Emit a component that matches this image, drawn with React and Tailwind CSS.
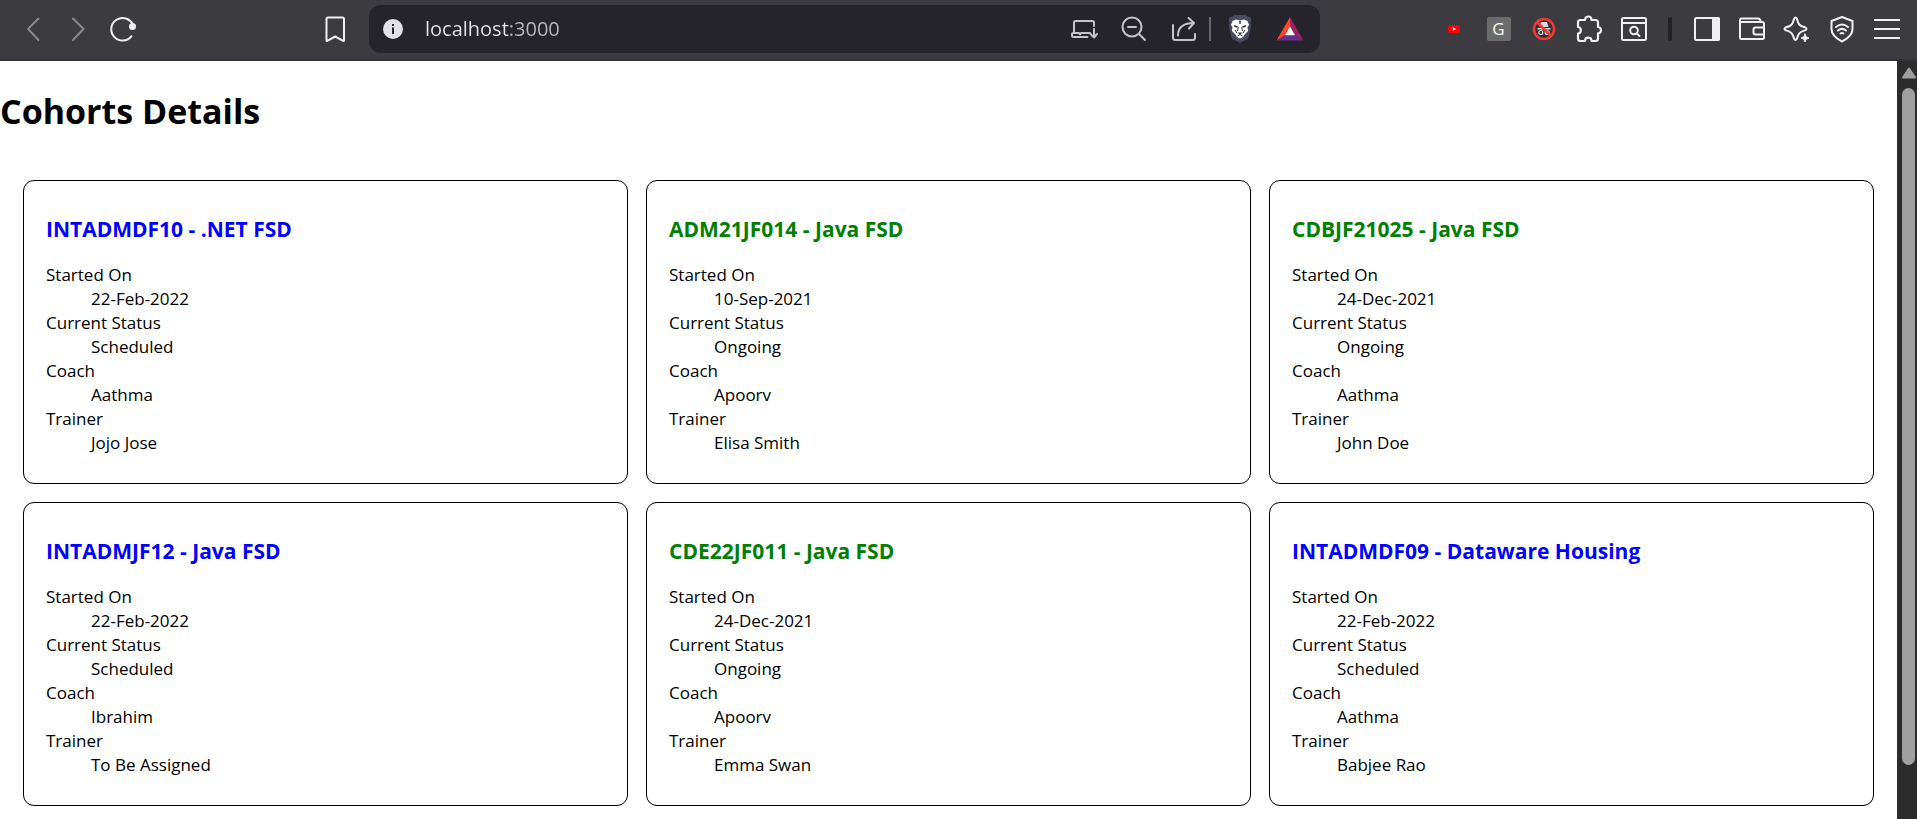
import React from "react";

const cohorts = [
  { code: "INTADMDF10", track: ".NET FSD", started: "22-Feb-2022", status: "Scheduled", coach: "Aathma", trainer: "Jojo Jose" },
  { code: "ADM21JF014", track: "Java FSD", started: "10-Sep-2021", status: "Ongoing", coach: "Apoorv", trainer: "Elisa Smith" },
  { code: "CDBJF21025", track: "Java FSD", started: "24-Dec-2021", status: "Ongoing", coach: "Aathma", trainer: "John Doe" },
  { code: "INTADMJF12", track: "Java FSD", started: "22-Feb-2022", status: "Scheduled", coach: "Ibrahim", trainer: "To Be Assigned" },
  { code: "CDE22JF011", track: "Java FSD", started: "24-Dec-2021", status: "Ongoing", coach: "Apoorv", trainer: "Emma Swan" },
  { code: "INTADMDF09", track: "Dataware Housing", started: "22-Feb-2022", status: "Scheduled", coach: "Aathma", trainer: "Babjee Rao" },
];

function CohortCard({ cohort }) {
  const color = cohort.status === "Ongoing" ? "text-[#008000]" : "text-[#0000ff]";
  return (
    <article className="rounded-[11px] border border-black px-[22px] pt-[33px] pb-7">
      <h3 className={`mb-[19px] text-[21px] leading-[30px] font-bold ${color}`}>
        {cohort.code} - {cohort.track}
      </h3>
      <dl className="text-[17px] leading-6">
        <dt>Started On</dt>
        <dd className="ml-[45px]">{cohort.started}</dd>
        <dt>Current Status</dt>
        <dd className="ml-[45px]">{cohort.status}</dd>
        <dt>Coach</dt>
        <dd className="ml-[45px]">{cohort.coach}</dd>
        <dt>Trainer</dt>
        <dd className="ml-[45px]">{cohort.trainer}</dd>
      </dl>
    </article>
  );
}

function ToolButton({ label, children, wide = false, dim = false }) {
  return (
    <button
      type="button"
      aria-label={label}
      className={`flex h-12 shrink-0 items-center justify-center ${wide ? "w-[50px]" : "w-[45px]"} ${dim ? "text-[#89898d]" : "text-[#f0f0f3]"}`}
    >
      {children}
    </button>
  );
}

function Icon({ children, width = 2 }) {
  return (
    <svg width="28" height="28" viewBox="0 0 28 28" fill="none" stroke="currentColor" strokeWidth={width} strokeLinecap="round" strokeLinejoin="round" aria-hidden="true">
      {children}
    </svg>
  );
}

function AddressBar() {
  return (
    <div className="flex h-12 min-w-0 flex-1 items-center rounded-[12px] bg-[#25242a] pr-[5px] pl-[14px] text-[#c4c4c9]">
      <button type="button" aria-label="Site information" className="shrink-0">
        <svg width="20" height="20" viewBox="0 0 20 20" aria-hidden="true">
          <circle cx="10" cy="10" r="10" fill="#e3e2e8" />
          <path d="M9 5h2v2H9zM9 8.600h2V15H9z" fill="#25242a" />
        </svg>
      </button>
      <input
        aria-label="Address"
        defaultValue="localhost:3000"
        className="ml-[22px] min-w-0 flex-1 bg-[linear-gradient(90deg,#e8e8ec_84px,#b9b9be_84px)] bg-clip-text text-[20px] leading-7 text-transparent outline-none"
      />
      <ToolButton label="Install app" wide>
        <span className="text-[#c4c4c9]">
          <Icon>
            <path d="M24 11V7.500Q24 6 22.500 6H5.500Q4 6 4 7.500V18M20 18H11l-1 1.500L9 18H3Q2 18 2 19v1.500Q2 22 3.500 22H17.500M24 14v8M20.500 19l3.500 3.500L27 19" />
          </Icon>
        </span>
      </ToolButton>
      <ToolButton label="Zoom out" wide>
        <span className="text-[#c4c4c9]">
          <Icon>
            <circle cx="12" cy="12" r="9.500" />
            <path d="M8 12h8M19 19l6 6" />
          </Icon>
        </span>
      </ToolButton>
      <ToolButton label="Share" wide>
        <span className="text-[#c4c4c9]">
          <Icon>
            <path d="M3 10v12.500Q3 25 5.500 25h17Q25 25 25 22.500V19" />
            <path d="M8 20.500C8 12 13 8 24 8M18.500 3L24 8l-5 5.500" />
          </Icon>
        </span>
      </ToolButton>
      <span className="mr-1 h-6 w-0.5 shrink-0 bg-[#67666c]" />
      <ToolButton label="Brave Shields" wide>
        <svg width="24" height="28" viewBox="0 0 24 28" aria-hidden="true">
          <path d="M6 0h12l2 2h2l1.500 3-1 3 .5 3-2 10q-.5 2-2.500 3.500L12 28l-6.500-3.500Q3.500 23 3 21L1 11l.5-3-1-3L2 2h2z" fill="#484a61" />
          <path d="M8 4.500l4 1 4-1 3.500 1.500 1.500 4-1.500 2 .5 4-3 3-2 3-3 1.500L9 22l-2-3-3-3 .5-4L3 10l1.500-4z" fill="#fff" />
          <path d="M5.500 10l4.500 1.200-1 1.600-2.500-.8zM18.500 10L14 11.200l1 1.600 2.500-.8zM9.500 17.500h5L12 19.500zM11 6h2l-.5 3h-1z" fill="#33344a" />
          <path d="M10.300 12l-.8 4M13.700 12l.8 4M7 15l2 3M17 15l-2 3M9.500 21l2.500-1.500 2.500 1.500" fill="none" stroke="#33344a" strokeWidth="1" />
        </svg>
      </ToolButton>
      <ToolButton label="Brave Rewards" wide>
        <svg width="28" height="24" viewBox="0 0 28 24" aria-hidden="true">
          <path d="M14 0L.5 23.500 9.500 18 14 10z" fill="#ff4724" />
          <path d="M14 0l13.500 23.500L18.500 18 14 10z" fill="#9e1f63" />
          <path d="M.5 23.500h27L18.500 18h-9z" fill="#662d91" />
          <path d="M14 9.500L19 18.300H9z" fill="#fff" />
        </svg>
      </ToolButton>
    </div>
  );
}

function Toolbar() {
  return (
    <header className="flex items-center border-b-2 border-[#333236] bg-[#3c3b3f] pt-[5px] pr-2 pb-1.5 pl-2.5">
      <nav aria-label="History" className="mr-[167px] flex">
        <ToolButton label="Back" dim>
          <Icon><path d="M19.500 3.500L9 14l10.500 11" /></Icon>
        </ToolButton>
        <ToolButton label="Forward" dim>
          <Icon><path d="M9 3.500L19.500 14 9 25" /></Icon>
        </ToolButton>
        <ToolButton label="Reload">
          <Icon>
            <path d="M22.500 21.200A11.300 11.300 0 1 1 24 10" />
            <circle cx="23.500" cy="11.500" r="2.500" fill="currentColor" />
          </Icon>
        </ToolButton>
      </nav>
      <div className="mr-3">
        <ToolButton label="Bookmark this page">
          <Icon><path d="M5.500 4Q5.500 2.500 7 2.500H21.500Q23 2.500 23 4V25.500q0 .8-.8.300L14.200 21.500 6.300 25.800q-.8.500-.8-.3z" /></Icon>
        </ToolButton>
      </div>
      <AddressBar />
      <div className="ml-[111px] flex items-center">
        <ToolButton label="YouTube extension">
          <svg width="12" height="8" viewBox="0 0 12 8" aria-hidden="true">
            <rect width="12" height="8" rx="2" fill="#ff0000" />
            <path d="M4.800 2.200v3.600L8 4z" fill="#fff" />
          </svg>
        </ToolButton>
        <ToolButton label="G extension">
          <span className="flex size-6 items-center justify-center rounded-[2px] bg-[#6b6b6b] text-[17px] leading-6 text-white">G</span>
        </ToolButton>
        <ToolButton label="Incognito blocker">
          <svg width="24" height="24" viewBox="0 0 24 24" fill="none" aria-hidden="true">
            <circle cx="12" cy="12" r="10" fill="#303236" stroke="#ef3b36" strokeWidth="2.600" />
            <path d="M9 5h6l1.500 5h-9zM5.500 11h13v1.500h-13z" fill="#dcdcdc" />
            <circle cx="8.800" cy="15.500" r="2" stroke="#dcdcdc" strokeWidth="1.200" />
            <circle cx="15.200" cy="15.500" r="2" stroke="#dcdcdc" strokeWidth="1.200" />
            <path d="M5 5l14 14" stroke="#ef3b36" strokeWidth="2.600" />
          </svg>
        </ToolButton>
        <ToolButton label="Extensions">
          <Icon width={2.2}>
            <path d="M3 7.500Q3 5 5.500 5H10C10 .3 16.500 .3 16.500 5H20.500Q23 5 23 7.500V12c4 .3 4 6 0 6.300V23.500Q23 26 20.500 26H16.500c0-4.500-6.500-4.500-6.500 0H5.500Q3 26 3 23.500V18.500c3.800-.3 3.800-6.200 0-6.500z" />
          </Icon>
        </ToolButton>
        <ToolButton label="Search tabs">
          <Icon>
            <rect x="2" y="3" width="24" height="22" rx="1.500" />
            <path d="M2 8h24" />
            <circle cx="14" cy="15.500" r="3.800" />
            <path d="M17 18.500l2.500 2.500" />
          </Icon>
        </ToolButton>
        <span className="mx-3 h-6 w-1 rounded-full bg-[#212024]" />
        <ToolButton label="Sidebar">
          <Icon>
            <rect x="2" y="3" width="24" height="22" rx="1.500" />
            <path d="M20 3h5q1 0 1 1v20q0 1-1 1h-5z" fill="currentColor" />
          </Icon>
        </ToolButton>
        <ToolButton label="Wallet">
          <Icon>
            <path d="M2 7V5q0-1.500 1.500-1.500H20Q22.500 3.500 22.500 7M2 7h22q2 0 2 2v13.500q0 1.500-1.500 1.500h-21Q2 24 2 22.500zM26 12.500H17.500q-2 0-2 2V17.500q0 2 2 2H26" />
          </Icon>
        </ToolButton>
        <ToolButton label="AI assistant">
          <Icon>
            <path d="M11 4q1.500-3 3 0C15.300 9.500 16.500 10.800 22.500 12.500q2 1.300 0 2.600C16.500 17 15.300 18.500 14 23.500q-1.500 3-3 0C9.700 18.500 8.500 17 2.500 15.100q-2-1.300 0-2.600C8.500 10.800 9.700 9.500 11 4z" />
            <path d="M22 19l1.200 2.800L26 23l-2.800 1.200L22 27l-1.200-2.800L18 23l2.800-1.200z" fill="currentColor" strokeWidth="1" />
          </Icon>
        </ToolButton>
        <ToolButton label="VPN">
          <Icon>
            <path d="M14 2l10.500 4V14c0 6-4.500 9.500-10.500 12.500C8 23.500 3.500 20 3.500 14V6z" />
            <path d="M8 12q6-5 12 0M10 15.500q4-3.300 8 0M12.500 18.500q1.500-1 3 0" />
          </Icon>
        </ToolButton>
        <ToolButton label="Menu">
          <svg width="26" height="20" viewBox="0 0 26 20" fill="currentColor" aria-hidden="true">
            <path d="M0 0h26v2H0zM0 9h26v2H0zM0 18h26v2H0z" />
          </svg>
        </ToolButton>
      </div>
    </header>
  );
}

function ScrollBar() {
  return (
    <div aria-hidden="true" className="flex w-5 shrink-0 flex-col items-center bg-[#2c2c2c] pt-1.5 pb-[54px] pl-[3px]">
      <svg width="16" height="12" viewBox="0 0 16 12">
        <path d="M8 1.500L14 10.500H2z" fill="#9f9f9f" stroke="#9f9f9f" strokeWidth="2" strokeLinejoin="round" />
      </svg>
      <div className="mt-[9px] w-[13px] flex-1 rounded-full bg-[#9f9f9f]" />
    </div>
  );
}

export default function App() {
  return (
    <div className="flex min-h-screen flex-col bg-white font-['Open_Sans','Noto_Sans',sans-serif] text-black">
      <Toolbar />
      <div className="flex flex-1">
        <main className="min-w-0 flex-1">
          <h1 className="pt-[26px] text-[34px] leading-[48px] font-bold">Cohorts Details</h1>
          <section aria-label="Cohorts" className="mt-[45px] grid grid-cols-3 gap-[18px] px-[23px]">
            {cohorts.map((cohort) => (
              <CohortCard key={cohort.code} cohort={cohort} />
            ))}
          </section>
        </main>
        <ScrollBar />
      </div>
    </div>
  );
}
